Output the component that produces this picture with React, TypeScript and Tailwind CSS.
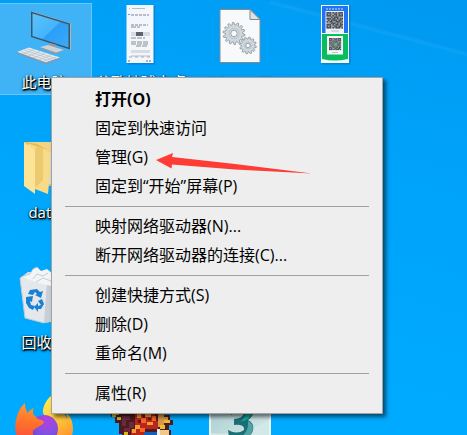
import type { ReactNode } from "react";

function Art({ children }: { children: ReactNode }) {
  return (
    <svg viewBox="0 0 62 62" className="size-[62px] shrink-0 overflow-visible" aria-hidden="true">
      {children}
    </svg>
  );
}

function ComputerArt() {
  return (
    <Art>
      <defs>
        <linearGradient id="screen" x1="0" y1="0" x2="1" y2="1">
          <stop offset="0" stopColor="#5cc3fb" />
          <stop offset="0.5" stopColor="#46b4fb" />
          <stop offset="0.52" stopColor="#2b9ff8" />
          <stop offset="1" stopColor="#3aa9f8" />
        </linearGradient>
      </defs>
      <path d="M18 7 L58 19.500 V46 L56 45 Z" fill="#b9b2ae" />
      <path d="M18 7.500 L57 19.500 V45.500 L18 33 Z" fill="#3b5568" />
      <path d="M19.500 9.500 L55.500 20.500 V43.500 L19.500 32 Z" fill="url(#screen)" />
      <path d="M37 39 L44 41 L42 45 L52 46 L43 50 L28 45 Z" fill="#8f9ba3" />
      <path d="M27 43 L35 41 L51 46 L43 48.500 Z" fill="#ccd3d8" />
      <path d="M4 48 L16 43.500 L47 53.500 L33 58.500 Z" fill="#e6eaee" />
      <path d="M4 48 L33 58.500 L47 53.500 V55 L33 60 L4 49.500 Z" fill="#8997a1" />
      <path
        d="M8 47.500 L36 57 M11 46 L39 55.500 M14 45 L43 54.500 M10 50 L21 45.500 M15 52 L27 47.500 M20 54 L32 49.500 M25 56 L38 51.500 M30 57.500 L43 53"
        stroke="#b3bec6"
        strokeWidth="0.7"
      />
    </Art>
  );
}

function DocumentShotArt() {
  return (
    <Art>
      <rect x="17.500" y="2" width="27.500" height="58.500" fill="#0873bd" opacity="0.6" />
      <rect x="16.500" y="1" width="27" height="58" fill="#f3f6fa" />
      <path d="M22 4.500h13M19 4.500h1M21 31h19M21 52h19" stroke="#b5bec8" />
      <path d="M18 10.500h2" stroke="#4ba3ea" />
      <path d="M21 11h18M21 21h17" stroke="#7d848c" strokeDasharray="3 1" />
      <path d="M21 23h9M21 34h14M21 38h17M21 40h18M26 42h12" stroke="#878e96" strokeDasharray="5 1" />
      <path d="M21 28h19v4H21zM21 46h19v3H21z" fill="#d5dce4" />
      <path d="M26 28h7v4h-7z" fill="#5c646d" />
      <path d="M19 53h21" stroke="#a4adb6" strokeDasharray="3 3" />
      <path d="M18 57h2M36 57h5" stroke="#6c737b" strokeDasharray="2 1" />
    </Art>
  );
}

function Gear({ x, y, r, teeth, hole }: { x: number; y: number; r: number; teeth: number; hole: number }) {
  const points: string[] = [];
  for (let i = 0; i < teeth; i += 1) {
    const step = (2 * Math.PI) / teeth;
    [
      [0.0, 0.78],
      [0.18, 1],
      [0.5, 1],
      [0.68, 0.78],
    ].forEach(([turn, scale]) => {
      const angle = (i + turn) * step;
      points.push(`${(r * scale * Math.cos(angle)).toFixed(2)},${(r * scale * Math.sin(angle)).toFixed(2)}`);
    });
  }
  return (
    <g transform={`translate(${x} ${y})`}>
      <polygon points={points.join(" ")} fill="#cfd8dd" stroke="#87939b" strokeWidth="0.8" />
      <circle r={hole * 1.6} fill="none" stroke="#b3bec5" strokeWidth="0.8" />
      <circle r={hole} fill="#f8f9fa" stroke="#87939b" strokeWidth="0.8" />
    </g>
  );
}

function LibraryFileArt() {
  return (
    <Art>
      <path d="M13 5.500 H43 L53 15.500 V58.500 H13 Z" fill="#f8f9fa" stroke="#85898c" />
      <path d="M43 5.500 V15.500 H53 Z" fill="#dfe1e2" stroke="#85898c" />
      <Gear x={27} y={29.5} r={11} teeth={14} hole={3.2} />
      <Gear x={41} y={41.5} r={8.4} teeth={12} hole={2.2} />
    </Art>
  );
}

const pattern = [
  "11101010111",
  "10100110101",
  "11101010111",
  "00010111000",
  "11101101011",
  "01011110110",
  "10110011101",
  "00011101010",
  "11101011011",
  "10100110110",
  "11101011101",
];

function Code({ x, y, unit }: { x: number; y: number; unit: number }) {
  return (
    <g transform={`translate(${x} ${y})`} fill="#4b4f57">
      <rect width={11 * unit} height={11 * unit} fill="#9a9ea4" />
      {pattern.flatMap((row, j) =>
        row.split("").map((cell, i) =>
          cell === "1" ? <rect key={`${i}-${j}`} x={i * unit} y={j * unit} width={unit} height={unit} /> : null,
        ),
      )}
    </g>
  );
}

function PaymentArt() {
  return (
    <Art>
      <rect x="18" y="2" width="28.500" height="58.500" fill="#0873bd" opacity="0.6" />
      <rect x="17" y="1" width="28" height="58" fill="#f4fbfa" />
      <rect x="18" y="2" width="26" height="27" fill="#1f74f6" />
      <path d="M22 5h18" stroke="#77a9f2" strokeWidth="2" strokeDasharray="2 1" />
      <rect x="21.500" y="7" width="18.500" height="22" fill="#eef1f8" />
      <Code x={22.500} y={8} unit={1.5} />
      <path d="M27 27h8" stroke="#b6bcc6" />
      <path d="M18 30 H44 V55 Q31 58 18 55 Z" fill="#08bd5d" />
      <rect x="23" y="32" width="16" height="18.500" fill="#f4f8f6" />
      <Code x={25} y={34} unit={1.1} />
      <rect x="30" y="39" width="3" height="3" fill="#5fae84" />
      <path d="M28 48.500h6" stroke="#b9c6be" />
    </Art>
  );
}

function FolderArt() {
  return (
    <Art>
      <path d="M11 8 H52 V52 H35 Z" fill="#e7bc58" />
      <path d="M12 8 H51 V16 L38 18 L24 10 Z" fill="#f1d382" />
      <path d="M34 18 H49 V50 H35 Z" fill="#d9d9d6" />
      <path d="M15 9.500 L37 17 V38 L35 60 L22 55 Z" fill="#f7db88" />
      <path d="M24 12 L30 15 V46 L22 54 V16 Z" fill="#ebca70" />
      <path d="M11 8 L22 17 V60 L11 52 Z" fill="#fce396" />
    </Art>
  );
}

function RecycleBinArt() {
  return (
    <Art>
      <path d="M7 14 L15 8 L48 9 L54 14 L48 56 L31 59 L12 54 Z" fill="#dce3e8" />
      <path d="M7 14 L34 19 L31 59 L12 54 Z" fill="#e4e8ec" />
      <path d="M34 19 L54 14 L48 56 L31 59 Z" fill="#c7ced5" />
      <path d="M8 13 L17 10 L20 5 L24 3 L28 7 L34 5 L39 9 L50 12 L38 22 L22 18 Z" fill="#f2f4f6" />
      <path d="M8 13 L17 10 L20 5 L24 3 L28 7 M20 15 L24 10 L30 12 L35 9 M23 18 L30 14 L38 17" fill="none" stroke="#b9c3cb" strokeWidth="0.8" />
      <path d="M7 14 L12 54 L31 59" fill="none" stroke="#bdc8d0" />
      <g fill="#1a80d4">
        <path d="M17 26 L24 25 L27 28 L30 27 L28 34 L22 31 L24 30 L22 28 L20 31 L15 30 Z" />
        <path d="M13 33 L20 32 L19 38 L17 37 L18 41 L22 42 L20 46 L16 44 L13 39 Z" />
        <path d="M25 37 L29 35 L31 40 L28 45 L25 45 V48 L21 43 L25 39 V42 L28 41 Z" />
      </g>
    </Art>
  );
}

function FirefoxArt() {
  return (
    <Art>
      <defs>
        <linearGradient id="flame" x1="0.2" y1="0" x2="0.1" y2="1">
          <stop offset="0" stopColor="#ff9a2e" />
          <stop offset="0.45" stopColor="#ff6a2c" />
          <stop offset="1" stopColor="#f0305a" />
        </linearGradient>
        <linearGradient id="tail" x1="0" y1="0" x2="0.3" y2="1">
          <stop offset="0" stopColor="#fff04f" />
          <stop offset="0.55" stopColor="#ffc53a" />
          <stop offset="1" stopColor="#ff8a2b" />
        </linearGradient>
        <radialGradient id="globe" cx="0.6" cy="0.2" r="0.9">
          <stop offset="0" stopColor="#b43fe0" />
          <stop offset="0.5" stopColor="#8550e0" />
          <stop offset="1" stopColor="#5448c8" />
        </radialGradient>
      </defs>
      <path d="M38 2 C35 4 31 10 30 16 C29 22 36 26 40 34 L31 56 C46 60 59 50 60 36 C60 28 58 22 53 19 L54 25 C50 15 41 12 38 2 Z" fill="url(#tail)" />
      <circle cx="31" cy="35" r="14" fill="url(#globe)" />
      <path d="M12 9 C7 13 4 20 2.500 29 C0 46 13 60 31 60 C42 60 50 54 54 46 C46 54 36 54 29 50 C22 47 19 41 20 37 C22 33 30 32 31 28 C31 26 24 26 22 22 C19 20 20 17 20.500 14 C18 15 16 17 14.500 19 C13 16 12 13 12 9 Z" fill="url(#flame)" />
    </Art>
  );
}

function GameArt() {
  return (
    <Art>
      <path d="M0 17 H54 V21 H60 V26 H63 V31 H59 V36 H61 V48 H12 V40 H9 V29 H5 V23 H1 Z" fill="#4d1a22" />
      <path d="M2 18h7v3H6v2H2zM7 23h4v3H7zM14 38h4v3h-4z" fill="#d8b521" />
      <path d="M12 22h8v4h-4v6h-4zM19 28h5v6h-5zM14 34h6v4h-6z" fill="#6b2b3a" />
      <path d="M25 19h20v8h3v8H34v6H21v-6h4z" fill="#b6281c" />
      <path d="M27 20h4v4h-4zM35 19h6v4h-6zM25 31h5v4h-5zM37 28h6v3h-6zM22 35h4v4h-4z" fill="#f3a02a" />
      <path d="M31 24h5v5h-5zM42 22h4v5h-4zM30 34h5v4h-5z" fill="#ff6126" />
      <path d="M33 21h2v3h-2zM28 26h3v3h-3zM38 24h3v2h-3z" fill="#5c1420" />
      <path d="M48 19h6v4h4v5h-4v5h-6z" fill="#d69848" />
      <path d="M54 26h6v3h-6zM50 31h5v4h-5z" fill="#e9bd35" />
      <path d="M34 38h13v9H34z" fill="#1560b8" />
      <path d="M47 35h3v12h-3z" fill="#f4f0ea" />
      <path d="M50 36h9v11h-9z" fill="#efc88a" />
    </Art>
  );
}

function MaxArt() {
  return (
    <Art>
      <defs>
        <linearGradient id="glass" x1="0" y1="0" x2="1" y2="1">
          <stop offset="0" stopColor="#a9cdd0" />
          <stop offset="1" stopColor="#deeeee" />
        </linearGradient>
      </defs>
      <rect x="2" y="2" width="62" height="62" fill="#e8f5f6" />
      <rect x="4" y="4" width="58" height="58" fill="url(#glass)" />
      <path d="M4 39 Q34 43 62 26 V62 H4Z" fill="#d3e8e8" />
      <path d="M24 15 Q33 8 43 12 Q50 19 41 26 Q49 30 45 39 Q38 48 22 43 L21 36 Q30 41 37 36 Q38 30 27 31 V25 Q37 24 37 18 Q32 15 24 21 Z" fill="#1b6e74" />
      <path d="M30 12 Q48 8 45 19 Q43 26 33 28 Q40 23 37 18 Z" fill="#12aaa5" />
      <path d="M41 27 Q49 31 44 40 Q40 45 32 44 Q42 39 41 27 Z" fill="#4fa3a5" />
    </Art>
  );
}

type Shortcut = { label?: string; art: ReactNode; selected?: boolean };

const shortcuts: (Shortcut | null)[] = [
  { label: "此电脑", art: <ComputerArt />, selected: true },
  { label: "谷歌地球文桌", art: <DocumentShotArt /> },
  { label: "ddraw.dll", art: <LibraryFileArt /> },
  { label: "LTK", art: <PaymentArt /> },
  { label: "data", art: <FolderArt /> },
  null,
  null,
  null,
  { label: "回收站", art: <RecycleBinArt /> },
  null,
  null,
  null,
  { art: <FirefoxArt /> },
  { art: <GameArt /> },
  { art: <MaxArt /> },
];

function DesktopIcon({ label, art, selected }: Shortcut) {
  return (
    <button
      type="button"
      className={`flex h-[92px] flex-col items-center gap-[7px] border text-[15px] leading-[18px] whitespace-nowrap text-white [text-shadow:1px_1px_1px_#000,1px_1px_2px_#000,0_1px_3px_#000] ${
        selected ? "border-[#6cc5fa] bg-[#3fb3f6]" : "border-transparent"
      }`}
    >
      {art}
      {label && <span>{label}</span>}
    </button>
  );
}

const menuGroups = [
  ["打开(O)", "固定到快速访问", "管理(G)", "固定到“开始”屏幕(P)"],
  ["映射网络驱动器(N)...", "断开网络驱动器的连接(C)..."],
  ["创建快捷方式(S)", "删除(D)", "重命名(M)"],
  ["属性(R)"],
];

function ContextMenu() {
  return (
    <div
      role="menu"
      className="absolute top-[77px] left-[51px] w-[332px] border border-[#a2a2a2] bg-[#eeeeee] pt-[7px] pb-[5px] shadow-[3px_3px_4px_rgba(0,0,0,0.55)]"
    >
      {menuGroups.map((group, index) => (
        <div key={group[0]} role="group">
          {index > 0 && <hr className="mx-[13px] my-[5px] border-t border-[#a0a0a0]" />}
          {group.map((item) => (
            <button
              key={item}
              type="button"
              role="menuitem"
              className={`block h-[29px] w-full pl-[43px] text-left text-[16px] leading-[29px] whitespace-nowrap text-black ${
                item === "打开(O)" ? "font-bold" : ""
              }`}
            >
              {item}
            </button>
          ))}
        </div>
      ))}
      <svg viewBox="0 0 156 22" className="absolute top-[75px] left-[104px] w-[156px]" aria-hidden="true">
        <path d="M0 7 L17 0 L16 4 L79 11 L156 20.500 L79 16.500 L16 11.500 L15.500 15.500 Z" fill="#ff3b35" />
      </svg>
    </div>
  );
}

export default function App() {
  return (
    <main className="relative h-screen overflow-hidden bg-[linear-gradient(195deg,#009bf3_0%,#00a3fa_35%,#00aaff_75%)] font-['Open_Sans','Noto_Sans_CJK_SC',sans-serif]">
      <svg viewBox="0 0 467 435" preserveAspectRatio="xMaxYMin slice" className="absolute inset-0 size-full" aria-hidden="true">
        <path d="M265 0 L467 54 V0 Z" fill="#0090ea" opacity="0.2" />
        <path d="M270 2 L467 54" stroke="#42b8ff" strokeWidth="4" opacity="0.15" />
      </svg>
      <div className="relative -ml-1 grid auto-rows-[92px] grid-cols-[repeat(auto-fill,96px)] gap-x-px gap-y-[38px] pt-[3px]">
        {shortcuts.map((shortcut, index) =>
          shortcut ? <DesktopIcon key={index} {...shortcut} /> : <span key={index} />,
        )}
      </div>
      <ContextMenu />
    </main>
  );
}
